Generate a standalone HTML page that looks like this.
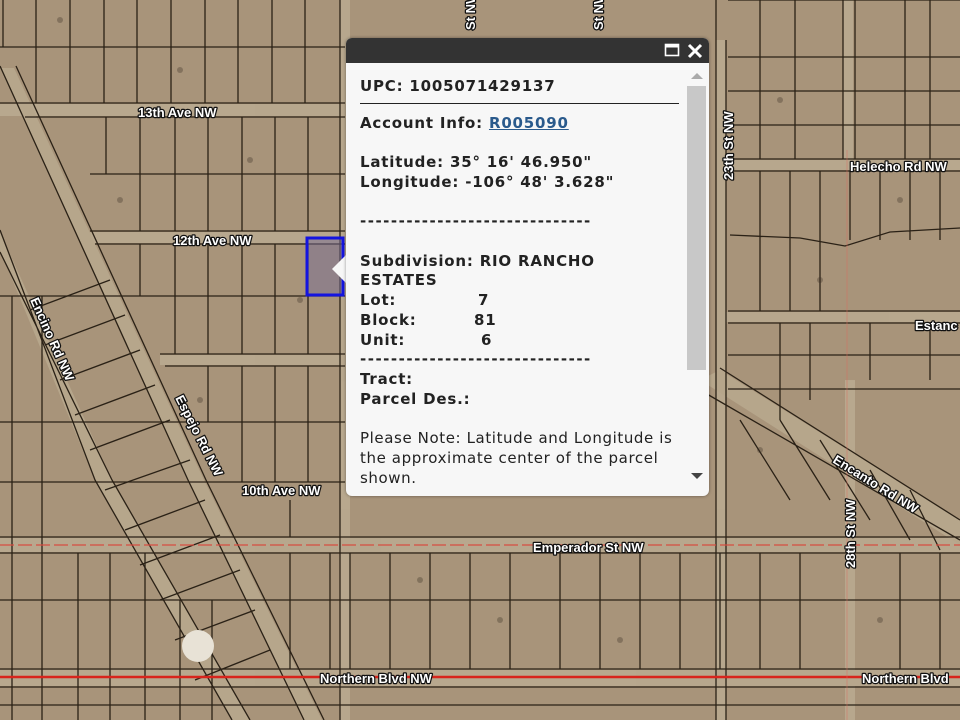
<!DOCTYPE html>
<html><head><meta charset="utf-8">
<style>
html,body{margin:0;padding:0;width:960px;height:720px;overflow:hidden;background:#a8947a}
#map{position:absolute;left:0;top:0}
.lbl{font-family:"Liberation Sans",sans-serif;font-size:13px;font-weight:bold;fill:#fff;stroke:#111;stroke-width:2.5px;paint-order:stroke;stroke-linejoin:round}
#pop{position:absolute;left:346px;top:38px;width:363px;height:458px;background:#f7f7f7;border-radius:6px;overflow:hidden;box-shadow:0 0 3px rgba(0,0,0,.4)}
#hdr{height:25px;background:#333}
#pop .t{position:absolute;left:14px;font-family:"DejaVu Sans","Liberation Sans",sans-serif;font-size:15px;color:#222;white-space:pre;font-weight:bold;letter-spacing:.8px}
#pop .n{font-weight:normal;letter-spacing:.6px}
#pop .d{letter-spacing:1.5px}
a{color:#2a5a8c}
#sb{position:absolute;left:341px;top:48px;width:19px;height:284px;background:#c8c8c8}
</style></head><body>
<svg id="map" width="960" height="720" viewBox="0 0 960 720">
<g fill="#b9aa90" opacity=".9">
<rect x="0" y="104" width="345" height="12"/>
<rect x="90" y="232" width="255" height="11"/>
<rect x="160" y="355" width="185" height="10"/>
<rect x="0" y="538" width="960" height="14"/>
<rect x="0" y="670" width="960" height="16"/>
<rect x="720" y="160" width="240" height="10"/>
<rect x="725" y="312" width="235" height="10"/>
<rect x="716" y="40" width="10" height="680"/>
<rect x="843" y="0" width="10" height="170"/>
<rect x="845" y="380" width="10" height="340"/>
<rect x="340" y="0" width="10" height="720"/>
</g>
<polygon points="0,68 14,68 204,480 322,720 304,720 188,480" fill="#b6a68b"/>
<polygon points="0,232 0,250 95,480 232,720 250,720 112,480" fill="#b6a68b"/>
<polygon points="700,380 720,370 960,520 960,545" fill="#b6a68b"/>
<g stroke="#2a2116" stroke-width="1.3" fill="none">
<path d="M0,47H345M0,103H345M25,117H345M90,174H345M90,231H345M95,244H345M0,296H345M160,354H345M165,366H345M0,422H345M0,482H345M0,537H960M0,553H960M0,600H960M0,669H960M0,687H960M0,705H960"/>
<path d="M3,0V47M36,0V103M70,0V103M104,0V103M137,0V103M171,0V103M205,0V103M238,0V103M272,0V103M305,0V103M340,0V720"/>
<path d="M106,117V174M140,117V231M175,117V231M208,117V231M242,117V231M275,117V231M308,117V231M140,244V296M175,244V296M208,244V296M242,244V296M275,244V296M308,244V354M175,296V354M208,296V354M242,296V354M275,296V354M242,366V482M275,366V482M308,366V482M208,366V422"/>
<path d="M12,296V720M42,296V720M78,553V720M110,553V720M145,553V720M180,600V720M212,600V720M290,500V537M290,553V669M330,553V669"/>
<path d="M350,553V669M390,553V669M430,553V669M470,553V669M510,553V669M560,553V669M600,553V669M640,553V669M680,553V669M720,553V669M760,553V669M800,553V669M900,553V669M940,553V669"/>
<path d="M716,0V720M726,40V720M728,0H960M728,57H960M728,91H960M728,125H960M728,159H960M728,171H960M728,311H960M728,323H960M728,355H960M728,389H960"/>
<path d="M760,0V159M795,0V159M843,0V159M855,0V159M905,0V159M930,0V159M760,171V311M790,171V311M820,171V311M850,171V240M880,171V240M910,171V240M940,171V240M730,235L800,238L845,246L890,232L960,228M780,323V420M810,323V400M870,323V380M930,323V380"/>
<path d="M0,66L188,480L304,720M16,66L206,480L324,720M0,230L95,480L232,720M0,252L112,480L250,720"/>
<path d="M30,310L110,280M45,345L125,315M60,380L140,350M75,415L155,385M90,450L170,420M105,490L190,460M125,530L205,500M140,565L220,535M160,600L240,570M175,640L255,610M195,680L270,650"/>
<path d="M700,390L960,540M720,368L960,520M740,420L790,500M780,420L830,500M820,440L870,520M870,470L910,540M910,490L940,550"/>
</g>
<g fill="#3e3527" opacity=".35">
<circle cx="60" cy="20" r="3"/><circle cx="180" cy="70" r="3"/><circle cx="250" cy="160" r="3"/><circle cx="120" cy="200" r="3"/><circle cx="300" cy="300" r="3"/><circle cx="200" cy="400" r="3"/><circle cx="780" cy="100" r="3"/><circle cx="900" cy="200" r="3"/><circle cx="820" cy="280" r="3"/><circle cx="760" cy="450" r="3"/><circle cx="880" cy="620" r="3"/><circle cx="500" cy="620" r="3"/><circle cx="420" cy="580" r="3"/><circle cx="620" cy="640" r="3"/>
</g>
<ellipse cx="198" cy="646" rx="16" ry="16" fill="#e8e2d6"/>
<path d="M0,545H960" stroke="#d84a3e" stroke-width="1.5" stroke-dasharray="14,4" opacity=".8"/>
<path d="M0,677H960" stroke="#d8241c" stroke-width="2.5"/>
<path d="M847,150V720" stroke="#d87060" stroke-width="1" opacity=".5"/>
<rect x="307" y="238" width="36" height="57" fill="rgba(120,110,150,.5)" stroke="#1414e0" stroke-width="3"/>
<text class="lbl" x="138" y="117">13th Ave NW</text>
<text class="lbl" x="173" y="245">12th Ave NW</text>
<text class="lbl" x="242" y="495">10th Ave NW</text>
<text class="lbl" x="533" y="552">Emperador St NW</text>
<text class="lbl" x="320" y="683">Northern Blvd NW</text>
<text class="lbl" x="862" y="683">Northern Blvd</text>
<text class="lbl" x="850" y="171">Helecho Rd NW</text>
<text class="lbl" x="915" y="330">Estanc</text>
<text class="lbl" transform="translate(30,300) rotate(66)">Encino Rd NW</text>
<text class="lbl" transform="translate(175,398) rotate(63)">Espejo Rd NW</text>
<text class="lbl" transform="translate(832,462) rotate(32)">Encanto Rd NW</text>
<text class="lbl" transform="translate(733,180) rotate(-90)">23th St NW</text>
<text class="lbl" transform="translate(855,568) rotate(-90)">28th St NW</text>
<text class="lbl" transform="translate(475,30) rotate(-90)">St NW</text>
<text class="lbl" transform="translate(603,30) rotate(-90)">St NW</text>
</svg>
<svg style="position:absolute;left:330px;top:254px" width="20" height="30"><polygon points="17,0 17,30 2,15" fill="#f7f7f7"/></svg>
<div id="pop">
<div id="hdr"></div>
<svg style="position:absolute;left:318px;top:4px" width="42" height="18">
<rect x="1.5" y="2.5" width="13" height="11" fill="none" stroke="#fff" stroke-width="1.6"/><rect x="1.5" y="2.5" width="13" height="3" fill="#fff"/>
<path d="M25,3L37,15M37,3L25,15" stroke="#fff" stroke-width="3"/>
</svg>
<div id="sb"></div>
<svg style="position:absolute;left:344px;top:34px" width="14" height="8"><polygon points="7,1 13,7 1,7" fill="#aaa"/></svg>
<svg style="position:absolute;left:344px;top:434px" width="14" height="8"><polygon points="1,1 13,1 7,7" fill="#444"/></svg>
<div style="position:absolute;left:14px;top:65px;width:319px;height:1px;background:#222"></div>
<div class="t" style="top:39px">UPC: 1005071429137</div>
<div class="t" style="top:76px">Account Info: <a href="#">R005090</a></div>
<div class="t" style="top:115px">Latitude: 35° 16' 46.950"</div>
<div class="t" style="top:135px">Longitude: -106° 48' 3.628"</div>
<div class="t d" style="top:174px">------------------------------</div>
<div class="t" style="top:214px">Subdivision: RIO RANCHO</div>
<div class="t" style="top:233px">ESTATES</div>
<div class="t" style="top:253px">Lot:</div><div class="t" style="top:253px;left:132px">7</div>
<div class="t" style="top:273px">Block:</div><div class="t" style="top:273px;left:128px">81</div>
<div class="t" style="top:293px">Unit:</div><div class="t" style="top:293px;left:135px">6</div>
<div class="t d" style="top:312px">------------------------------</div>
<div class="t" style="top:332px">Tract:</div>
<div class="t" style="top:352px">Parcel Des.:</div>
<div class="t n" style="top:391px">Please Note: Latitude and Longitude is</div>
<div class="t n" style="top:411px">the approximate center of the parcel</div>
<div class="t n" style="top:431px">shown.</div>
</div>
</body></html>
